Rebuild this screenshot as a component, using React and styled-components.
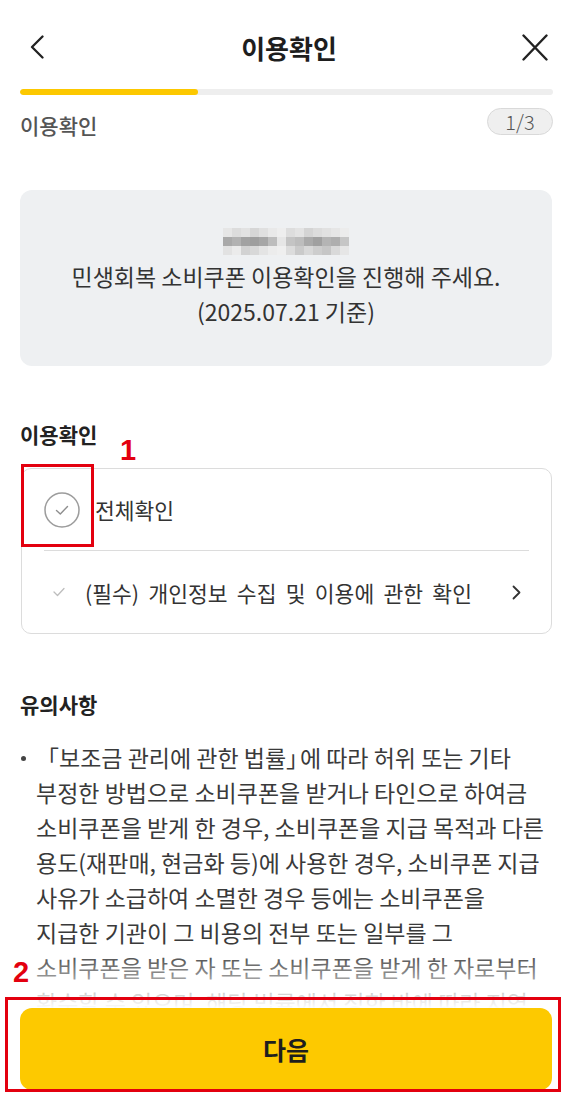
import styled, {createGlobalStyle} from "styled-components";

const GlobalStyle = createGlobalStyle`
    * {
        box-sizing: border-box;
    }

    body {
        margin: 0;
        background: #fff;
        font-family: "Noto Sans CJK KR", "Noto Sans", sans-serif;
        color: #222;
    }
`;

const Page = styled.div`
    position: relative;
    width: 564px;
    height: 1103px;
    overflow: hidden;
    display: flex;
    flex-direction: column;
    background: #fff;
`;

const Header = styled.header`
    display: grid;
    grid-template-columns: 1fr auto 1fr;
    align-items: center;
    height: 89px;
    padding: 5px 16px 0 30px;
`;

const HeaderTitle = styled.h1`
    margin: 0;
    font-size: 26px;
    font-weight: 700;
    color: #1e1e1e;
`;

const IconButton = styled.button`
    display: flex;
    align-items: center;
    justify-content: ${props => props.$end ? 'flex-end' : 'flex-start'};
    padding: 0;
    border: none;
    background: none;
`;

const Content = styled.main`
    flex: 1;
    min-height: 0;
    padding: 0 11px 0 20px;
`;

const ProgressTrack = styled.div`
    height: 6px;
    border-radius: 3px;
    background: #eeeeee;
    overflow: hidden;
`;

const ProgressFill = styled.div`
    height: 100%;
    border-radius: 3px;
    background: #fcc800;
`;

const StepRow = styled.div`
    display: flex;
    align-items: center;
    justify-content: space-between;
    height: 27px;
    margin-top: 13px;
`;

const StepLabel = styled.span`
    font-size: 21px;
    font-weight: 500;
    color: #555;
    padding-top: 6px;
`;

const StepPill = styled.span`
    display: flex;
    align-items: center;
    justify-content: center;
    width: 66px;
    height: 27px;
    border: 1px solid #d9d9d9;
    border-radius: 14px;
    background: #efefef;
    font-size: 20px;
    font-weight: 300;
    color: #555;
`;

const InfoBox = styled.section`
    height: 176px;
    margin: 55px 1px 0 0;
    padding: 34px 10px 0;
    border-radius: 12px;
    background: #eef0f2;
    text-align: center;
    font-size: 23px;
    line-height: 35px;
    color: #333;
`;

const InfoLine = styled.div`
    display: flex;
    align-items: center;
    justify-content: center;
    height: 35px;
    white-space: nowrap;
`;

const SectionTitle = styled.h2`
    margin: ${props => props.$gap}px 0 0;
    font-size: 21px;
    font-weight: 700;
    line-height: 28px;
    color: #222;
`;

const Card = styled.div`
    margin: 20px 1px 0 1px;
    padding: 0 22px;
    border: 1px solid #dcdcdc;
    border-radius: 10px;
`;

const CheckRow = styled.div`
    display: flex;
    align-items: center;
    height: 82px;
    border-bottom: ${props => props.$divider ? '1px solid #dcdcdc' : 'none'};
    font-size: 21.5px;
    word-spacing: 4.5px;
    color: #333;
    white-space: nowrap;
`;

const CircleIcon = styled.svg`
    flex-shrink: 0;
    margin-right: 15px;
`;

const SmallCheck = styled.svg`
    flex-shrink: 0;
    margin: 0 20px 0 9px;
`;

const RowChevron = styled.svg`
    flex-shrink: 0;
    margin: 0 8px 0 auto;
`;

const NoteList = styled.div`
    display: flex;
    margin-top: 22px;
`;

const BulletDot = styled.span`
    flex-shrink: 0;
    width: 5px;
    height: 5px;
    margin: 16px 10px 0 1px;
    border-radius: 50%;
    background: #444;
`;

const NoteText = styled.p`
    margin: 0;
    font-size: 23px;
    line-height: 35px;
    color: #3a3a3a;
`;

const NoteLine = styled.span`
    display: block;
    white-space: nowrap;
`;

const CloseBracket = styled.span`
    letter-spacing: -0.4em;
`;

const BottomBar = styled.footer`
    position: relative;
    padding: 8px 12px 13px 20px;
    background: linear-gradient(rgba(255, 255, 255, 0.88), #fff 9px);

    &::before {
        content: '';
        position: absolute;
        left: 0;
        right: 0;
        bottom: 100%;
        height: 50px;
        background: linear-gradient(rgba(255, 255, 255, 0), rgba(255, 255, 255, 0.88));
    }
`;

const NextButton = styled.button`
    width: 100%;
    height: 82px;
    border: none;
    border-radius: 12px;
    background: #fdc900;
    font-family: inherit;
    font-size: 25px;
    font-weight: 700;
    color: #1e1e1e;
`;

const MarkBox = styled.div`
    position: absolute;
    top: ${props => props.$top}px;
    left: ${props => props.$left}px;
    width: ${props => props.$width}px;
    height: ${props => props.$height}px;
    border: 3px solid #e3000f;
    pointer-events: none;
`;

const MarkNumber = styled.span`
    position: absolute;
    top: ${props => props.$top}px;
    left: ${props => props.$left}px;
    font-family: "Liberation Sans", Arial, sans-serif;
    font-size: 29px;
    font-weight: 700;
    line-height: 1;
    color: #e3000f;
`;

const mosaic = [
    ['e6', 'dc', 'e2', 'd6', 'e0', 'e9', 'ee', 'dd', 'e3', 'd4', 'dc', 'e1', 'e6', 'ec'],
    ['a9', 'b2', 'a2', '9e', 'a6', 'bd', 'e6', 'c4', 'bd', 'aa', 'a0', 'b4', 'ae', 'c6'],
    ['e2', 'eb', 'd2', 'd8', 'e4', 'ec', 'ef', 'dc', 'ca', 'd8', 'cd', 'c6', 'd9', 'e6'],
];

const notes = [
    <>「보조금 관리에 관한 법률<CloseBracket>」</CloseBracket>에 따라 허위 또는 기타</>,
    '부정한 방법으로 소비쿠폰을 받거나 타인으로 하여금',
    '소비쿠폰을 받게 한 경우, 소비쿠폰을 지급 목적과 다른',
    '용도(재판매, 현금화 등)에 사용한 경우, 소비쿠폰 지급',
    '사유가 소급하여 소멸한 경우 등에는 소비쿠폰을',
    '지급한 기관이 그 비용의 전부 또는 일부를 그',
    '소비쿠폰을 받은 자 또는 소비쿠폰을 받게 한 자로부터',
    '환수할 수 있으며, 해당 법률에서 정한 바에 따라 지역',
];

function BlurredName() {
    return (
        <svg width="126" height="27" viewBox="0 0 126 27">
            {mosaic.map((row, r) => row.map((shade, c) => (
                <rect key={`${r}-${c}`} x={c * 9} y={r * 9} width="9" height="9" fill={`#${shade}${shade}${shade}`}/>
            )))}
        </svg>
    );
}

export default function App() {
    const step = 1;
    const total = 3;

    return (
        <Page>
            <GlobalStyle/>
            <Header>
                <IconButton aria-label="뒤로">
                    <svg width="14" height="24" viewBox="0 0 14 24" fill="none">
                        <path d="M12.5 1.5 L2 12 L12.5 22.5" stroke="#222" strokeWidth="2.3" strokeLinecap="round" strokeLinejoin="round"/>
                    </svg>
                </IconButton>
                <HeaderTitle>이용확인</HeaderTitle>
                <IconButton $end aria-label="닫기">
                    <svg width="26" height="27" viewBox="0 0 26 27" fill="none">
                        <path d="M1.5 1.5 L24.5 25.5 M24.5 1.5 L1.5 25.5" stroke="#222" strokeWidth="2.4" strokeLinecap="round"/>
                    </svg>
                </IconButton>
            </Header>

            <Content>
                <ProgressTrack>
                    <ProgressFill style={{width: `${(step / total) * 100}%`}}/>
                </ProgressTrack>

                <StepRow>
                    <StepLabel>이용확인</StepLabel>
                    <StepPill>{step}/{total}</StepPill>
                </StepRow>

                <InfoBox>
                    <InfoLine><BlurredName/></InfoLine>
                    <InfoLine>민생회복 소비쿠폰 이용확인을 진행해 주세요.</InfoLine>
                    <InfoLine>(2025.07.21 기준)</InfoLine>
                </InfoBox>

                <SectionTitle $gap={54}>이용확인</SectionTitle>
                <Card>
                    <CheckRow $divider>
                        <CircleIcon width="36" height="36" viewBox="0 0 36 36" fill="none">
                            <circle cx="18" cy="18" r="17" stroke="#9c9c9c" strokeWidth="1.5"/>
                            <path d="M12.5 18.5 L16.3 22 L23.5 14.5" stroke="#8e8e8e" strokeWidth="1.4" strokeLinecap="round" strokeLinejoin="round"/>
                        </CircleIcon>
                        전체확인
                    </CheckRow>
                    <CheckRow>
                        <SmallCheck width="12" height="10" viewBox="0 0 12 10" fill="none">
                            <path d="M1 5 L4.5 8.5 L11 1.5" stroke="#bdbdbd" strokeWidth="1.3" strokeLinecap="round" strokeLinejoin="round"/>
                        </SmallCheck>
                        (필수) 개인정보 수집 및 이용에 관한 확인
                        <RowChevron width="9" height="15" viewBox="0 0 9 15" fill="none">
                            <path d="M1.5 1.5 L7.5 7.5 L1.5 13.5" stroke="#333" strokeWidth="1.8" strokeLinecap="round" strokeLinejoin="round"/>
                        </RowChevron>
                    </CheckRow>
                </Card>

                <SectionTitle $gap={56}>유의사항</SectionTitle>
                <NoteList>
                    <BulletDot/>
                    <NoteText>
                        {notes.map((line, i) => <NoteLine key={i}>{line}</NoteLine>)}
                    </NoteText>
                </NoteList>
            </Content>

            <BottomBar>
                <NextButton>다음</NextButton>
            </BottomBar>

            <MarkBox $top={464} $left={21} $width={73} $height={83}/>
            <MarkNumber $top={436} $left={120}>1</MarkNumber>
            <MarkBox $top={997} $left={5} $width={556} $height={95}/>
            <MarkNumber $top={958} $left={13}>2</MarkNumber>
        </Page>
    );
}
